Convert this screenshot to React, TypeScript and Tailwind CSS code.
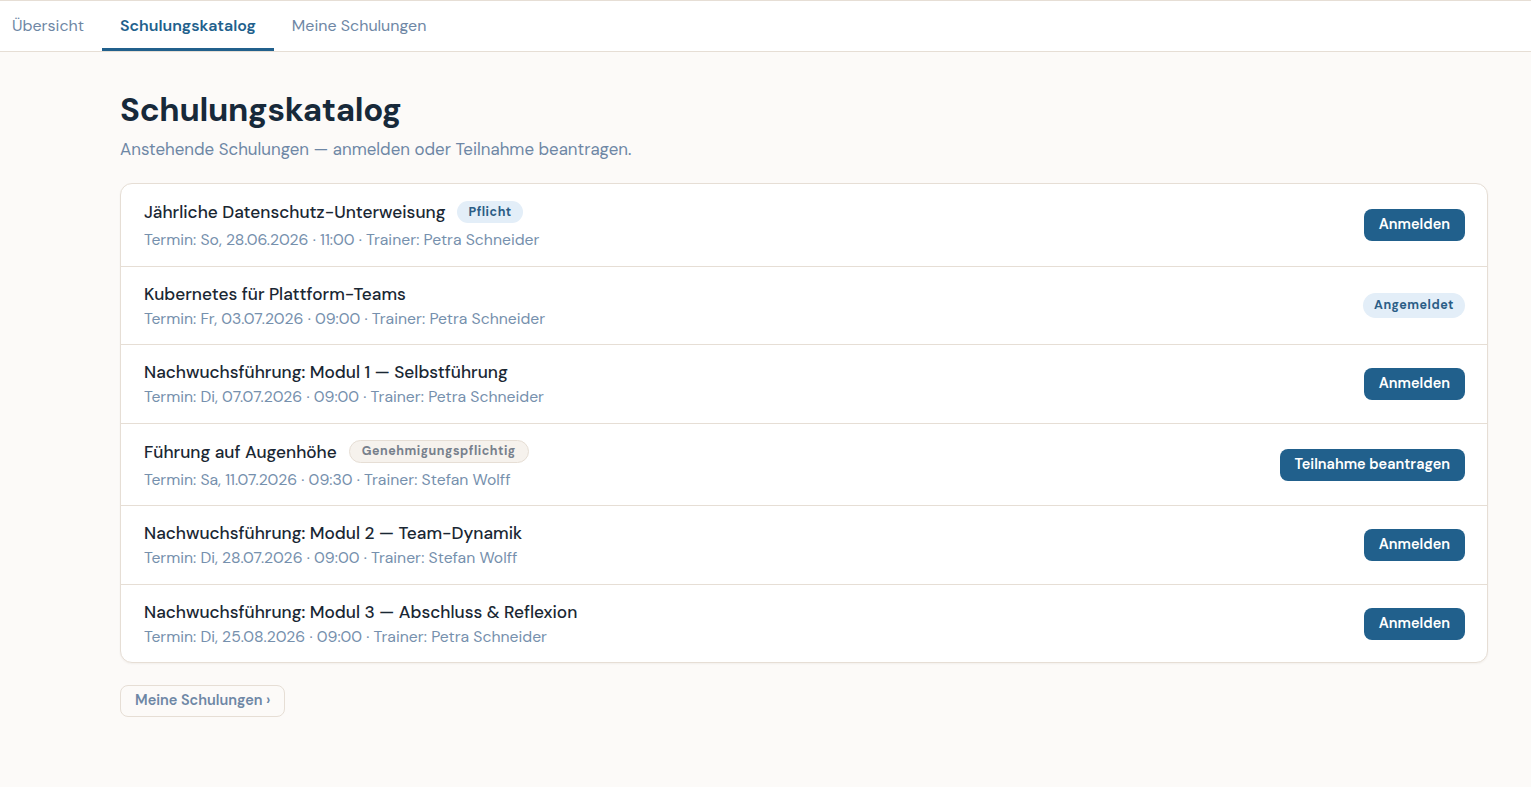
import * as React from "react";

type Training = {
  id: number;
  title: string;
  meta: string;
  badge?: "pflicht" | "genehmigung";
  action: "anmelden" | "angemeldet" | "beantragen";
};

const trainings: Training[] = [
  {
    id: 1,
    title: "Jährliche Datenschutz-Unterweisung",
    meta: "Termin: So, 28.06.2026 · 11:00 · Trainer: Petra Schneider",
    badge: "pflicht",
    action: "anmelden",
  },
  {
    id: 2,
    title: "Kubernetes für Plattform-Teams",
    meta: "Termin: Fr, 03.07.2026 · 09:00 · Trainer: Petra Schneider",
    action: "angemeldet",
  },
  {
    id: 3,
    title: "Nachwuchsführung: Modul 1 — Selbstführung",
    meta: "Termin: Di, 07.07.2026 · 09:00 · Trainer: Petra Schneider",
    action: "anmelden",
  },
  {
    id: 4,
    title: "Führung auf Augenhöhe",
    meta: "Termin: Sa, 11.07.2026 · 09:30 · Trainer: Stefan Wolff",
    badge: "genehmigung",
    action: "beantragen",
  },
  {
    id: 5,
    title: "Nachwuchsführung: Modul 2 — Team-Dynamik",
    meta: "Termin: Di, 28.07.2026 · 09:00 · Trainer: Stefan Wolff",
    action: "anmelden",
  },
  {
    id: 6,
    title: "Nachwuchsführung: Modul 3 — Abschluss & Reflexion",
    meta: "Termin: Di, 25.08.2026 · 09:00 · Trainer: Petra Schneider",
    action: "anmelden",
  },
];

const tabs = ["Übersicht", "Schulungskatalog", "Meine Schulungen"];

export default function App() {
  return (
    <div
      className="min-h-[787px] bg-[#fcfaf8] text-[#1a2733]"
      style={{ fontFamily: '"DM Sans", Inter, "Noto Sans", sans-serif' }}
    >
      {/* Tabs */}
      <nav className="flex h-[52px] border-t border-b border-[#e6ded5] bg-white">
        <div className="-ml-1.5 flex">
          {tabs.map((tab) => {
            const active = tab === "Schulungskatalog";
            return (
              <button
                key={tab}
                className={`px-[18px] pt-[2px] text-[16px] border-b-[3px] ${
                  active
                    ? "border-[#21608c] font-semibold text-[#21608c]"
                    : "border-transparent text-[#6e87a5]"
                }`}
              >
                {tab}
              </button>
            );
          })}
        </div>
      </nav>

      <main className="pl-[120px] pr-[43px] pt-[38px]">
        {/* Header */}
        <h1 className="text-[33px] font-bold leading-[40px] tracking-[-0.3px] text-[#17293a]">
          Schulungskatalog
        </h1>
        <p className="mt-[6px] text-[16.9px] leading-[26px] text-[#6e87a5]">
          Anstehende Schulungen — anmelden oder Teilnahme beantragen.
        </p>

        {/* List */}
        <div className="mt-[21px] overflow-hidden rounded-xl border border-[#e6ded5] bg-white shadow-[0_1px_2px_rgba(60,40,20,0.05)]">
          {trainings.map((t, i) => (
            <div
              key={t.id}
              className={`flex items-center justify-between pl-[23px] pr-[22px] pt-[15px] pb-[14.5px] ${
                i > 0 ? "border-t border-[#e6ded5]" : ""
              }`}
            >
              <div>
                <div
                  className={`flex items-center gap-[12px] ${
                    t.badge ? "h-[26px]" : "h-[24px]"
                  }`}
                >
                  <span className="text-[17.25px] font-medium leading-[24px] text-[#1a2733]">
                    {t.title}
                  </span>
                  {t.badge === "pflicht" && (
                    <span className="rounded-full bg-[#e3eef8] px-[11px] py-[2px] text-[12.5px] font-bold tracking-[0.5px] text-[#2b5d86]">
                      Pflicht
                    </span>
                  )}
                  {t.badge === "genehmigung" && (
                    <span className="rounded-full border border-[#e6ded5] bg-[#f6f2ed] px-[12px] py-[1px] text-[12.5px] font-bold tracking-[0.5px] text-[#77808c]">
                      Genehmigungspflichtig
                    </span>
                  )}
                </div>
                <p
                  className={`text-[15.75px] leading-[22px] text-[#7690ad] ${
                    t.badge ? "mt-[4px]" : "mt-[2px]"
                  }`}
                >
                  {t.meta}
                </p>
              </div>

              {t.action === "angemeldet" ? (
                <span className="rounded-full bg-[#e3eef8] px-[11px] py-[3px] text-[12.5px] font-bold tracking-[0.5px] text-[#2b5d86]">
                  Angemeldet
                </span>
              ) : (
                <button className="h-[32px] rounded-lg bg-[#21608c] px-[15px] text-[14.5px] font-semibold text-white">
                  {t.action === "anmelden" ? "Anmelden" : "Teilnahme beantragen"}
                </button>
              )}
            </div>
          ))}
        </div>

        <button className="mt-[22px] h-[32px] rounded-lg border border-[#e6ded5] px-[14px] text-[14.5px] font-semibold text-[#6e87a5]">
          Meine Schulungen ›
        </button>
      </main>
    </div>
  );
}
